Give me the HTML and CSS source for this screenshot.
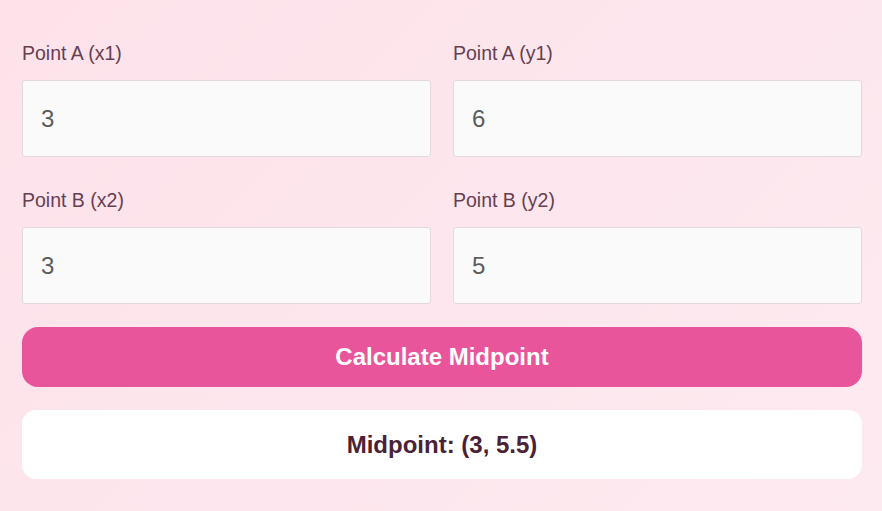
FILE: index.html
```html
<!DOCTYPE html>
<html lang="en">

<head>
    <meta charset="UTF-8">
    <meta name="viewport" content="width=device-width, initial-scale=1.0">
    <title>Midpoint Calculator</title>
    <link rel="stylesheet" href="styles.css">
</head>

<body>
    <main class="calc">
        <div class="fields">
            <div class="field">
                <label for="x1">Point A (x1)</label>
                <input type="number" id="x1" value="3">
            </div>
            <div class="field">
                <label for="y1">Point A (y1)</label>
                <input type="number" id="y1" value="6">
            </div>
            <div class="field">
                <label for="x2">Point B (x2)</label>
                <input type="number" id="x2" value="3">
            </div>
            <div class="field">
                <label for="y2">Point B (y2)</label>
                <input type="number" id="y2" value="5">
            </div>
        </div>
        <button class="calc-btn" type="button">Calculate Midpoint</button>
        <div class="result">Midpoint: (3, 5.5)</div>
    </main>
</body>

</html>
```

FILE: styles.css
```css
* {
    box-sizing: border-box;
}

html,
body {
    height: 100%;
}

body {
    margin: 0;
    font-family: "Liberation Sans", Arial, sans-serif;
    background: linear-gradient(135deg, #fde2ea 0%, #fdeaf0 100%);
}

.calc {
    padding: 43px 20px 32px 22px;
}

.fields {
    display: grid;
    grid-template-columns: 1fr 1fr;
    column-gap: 22px;
    row-gap: 33px;
}

.field label {
    display: block;
    font-size: 19.5px;
    line-height: 21px;
    color: #673f52;
    margin-bottom: 16px;
}

.field input {
    display: block;
    width: 100%;
    height: 77px;
    padding: 0 18px;
    border: 1px solid #e2d9dd;
    border-radius: 3px;
    background-color: #fafafa;
    font-family: "Liberation Sans", Arial, sans-serif;
    font-size: 24px;
    color: #5c5c5c;
    outline: none;
    -moz-appearance: textfield;
}

.field input::-webkit-inner-spin-button,
.field input::-webkit-outer-spin-button {
    -webkit-appearance: none;
    margin: 0;
}

.calc-btn {
    display: block;
    width: 100%;
    height: 60px;
    margin-top: 23px;
    border: none;
    border-radius: 16px;
    background-color: #e9559b;
    color: #ffffff;
    font-family: "Liberation Sans", Arial, sans-serif;
    font-size: 24px;
    font-weight: bold;
    cursor: pointer;
}

.result {
    margin-top: 23px;
    height: 69px;
    display: flex;
    align-items: center;
    justify-content: center;
    border-radius: 14px;
    background-color: #ffffff;
    color: #4b2235;
    font-size: 24px;
    font-weight: bold;
}
```
